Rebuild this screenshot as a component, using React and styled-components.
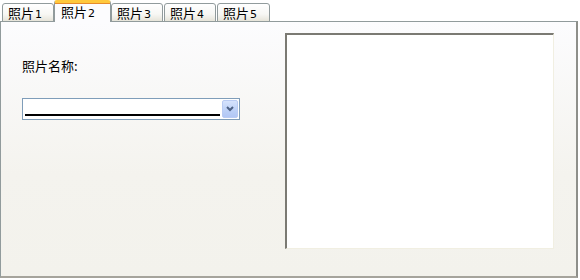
import styled, { createGlobalStyle } from 'styled-components';

const GlobalStyle = createGlobalStyle`
  html, body {
    margin: 0;
    padding: 0;
    background: #ffffff;
  }
  body {
    font-family: "Noto Sans CJK SC", "Liberation Sans", sans-serif;
    font-size: 12px;
    color: #000;
  }
`;

const tabs = [
  { label: '照片', num: '1', width: 52 },
  { label: '照片', num: '2', width: 57, active: true },
  { label: '照片', num: '3', width: 52 },
  { label: '照片', num: '4', width: 52 },
  { label: '照片', num: '5', width: 53 }
];

const Frame = styled.div`
  width: 580px;
  height: 280px;
  display: flex;
  flex-direction: column;
`;

const TabStrip = styled.div`
  display: flex;
  align-items: flex-end;
  gap: 1px;
  height: 22px;
  padding-left: 2px;
  position: relative;
  z-index: 1;
`;

const Tab = styled.div`
  box-sizing: border-box;
  width: ${(p) => p.$width}px;
  height: ${(p) => (p.$active ? 22 : 19)}px;
  margin-left: ${(p) => (p.$active ? -1 : 0)}px;
  margin-right: ${(p) => (p.$active ? -1 : 0)}px;
  border: 1px solid #919b9c;
  border-bottom: ${(p) => (p.$active ? 'none' : '1px solid #919b9c')};
  border-top: ${(p) => (p.$active ? '3px solid #ffc83c' : '1px solid #919b9c')};
  border-radius: 3px 3px 0 0;
  background: ${(p) =>
    p.$active ? '#fcfcfe' : 'linear-gradient(#ffffff, #f7f7f4 60%, #e6e4d9)'};
  box-shadow: ${(p) => (p.$active ? 'inset 0 1px 0 #e68b2c' : 'none')};
  display: flex;
  align-items: center;
  padding-left: ${(p) => (p.$active ? 6 : 5)}px;
  padding-top: ${(p) => (p.$active ? 0 : 1)}px;
  white-space: nowrap;
`;

const TabText = styled.span`
  font-size: 13px;
  line-height: 15px;
`;

const TabNum = styled.span`
  font-family: "DejaVu Sans", sans-serif;
  font-size: 11px;
  margin-left: 1px;
`;

const Pane = styled.div`
  box-sizing: border-box;
  margin-top: -1px;
  width: 578px;
  height: 257px;
  border: 1px solid #919b9c;
  border-right: 2px solid #8e8f8a;
  border-bottom: 2px solid #a6a49c;
  background: linear-gradient(#fcfcfe, #f4f3ee 60%, #f3f2ec);
  display: flex;
  padding: 11px 0 0 21px;
`;

const LeftCol = styled.div`
  width: 218px;
  display: flex;
  flex-direction: column;
  padding-top: 25px;
`;

const Label = styled.div`
  font-size: 13px;
  line-height: 15px;
  height: 15px;
`;

const Select = styled.div`
  box-sizing: border-box;
  margin-top: 25px;
  width: 218px;
  height: 22px;
  border: 1px solid #7f9db9;
  background: #fff;
  display: flex;
  align-items: center;
  padding: 1px 1px 1px 2px;
`;

const SelectValue = styled.div`
  flex: 1;
  height: 100%;
  display: flex;
  align-items: flex-end;
  padding-bottom: 2px;
  box-sizing: border-box;
`;

const Underline = styled.div`
  width: 195px;
  height: 2px;
  background: #000;
`;

const DropButton = styled.div`
  box-sizing: border-box;
  width: 16px;
  height: 18px;
  border: 1px solid #b9cbf3;
  border-radius: 2px;
  background: linear-gradient(#d6e3fd, #bcd0f7 60%, #b2c7f5);
  display: flex;
  align-items: center;
  justify-content: center;
`;

const PictureBox = styled.div`
  box-sizing: border-box;
  margin-left: 45px;
  width: 269px;
  height: 216px;
  border-top: 2px solid #7b7a73;
  border-left: 2px solid #7b7a73;
  border-right: 1px solid #f1efe2;
  border-bottom: 1px solid #f1efe2;
  background: #ffffff;
`;

const App = () => (
  <>
    <GlobalStyle />
    <Frame>
      <TabStrip>
        {tabs.map((t) => (
          <Tab key={t.num} $width={t.width} $active={t.active}>
            <TabText>
              {t.label}
              <TabNum>{t.num}</TabNum>
            </TabText>
          </Tab>
        ))}
      </TabStrip>
      <Pane>
        <LeftCol>
          <Label>照片名称:</Label>
          <Select>
            <SelectValue>
              <Underline />
            </SelectValue>
            <DropButton>
              <svg width="8" height="6" viewBox="0 0 8 6">
                <path d="M1 1 L4 4 L7 1" fill="none" stroke="#4d6185" strokeWidth="2" />
              </svg>
            </DropButton>
          </Select>
        </LeftCol>
        <PictureBox />
      </Pane>
    </Frame>
  </>
);

export default App;
